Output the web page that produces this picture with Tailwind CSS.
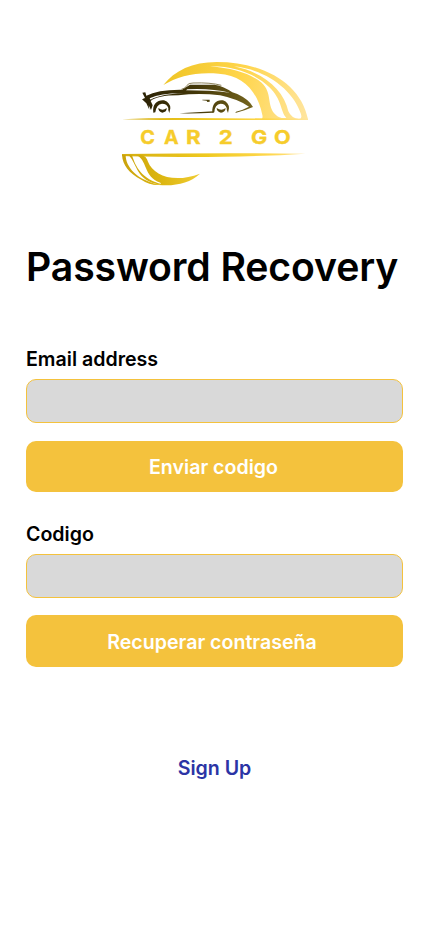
<!DOCTYPE html>
<html lang="es">
<head>
<meta charset="utf-8">
<meta name="viewport" content="width=device-width, initial-scale=1">
<title>Password Recovery</title>
<script src="https://cdn.jsdelivr.net/npm/@tailwindcss/browser@4"></script>
</head>
<body class="bg-white">
<main class="flex h-[934px] w-[430px] flex-col overflow-hidden bg-white pl-[26px] pr-[27px] pt-[50px] font-['Inter',sans-serif] font-semibold text-black">
  <svg class="ml-[84px] h-[145px] w-[210px] shrink-0" viewBox="0 0 630 435" role="img" aria-label="Car 2 Go">
    <defs>
      <linearGradient id="arc" gradientUnits="userSpaceOnUse" x1="160" y1="90" x2="595" y2="190"><stop offset="0" stop-color="#efc526"/><stop offset=".5" stop-color="#ffd54a"/><stop offset="1" stop-color="#ffe5a0"/></linearGradient>
      <linearGradient id="line" gradientUnits="userSpaceOnUse" x1="36" y1="0" x2="590" y2="0"><stop offset="0" stop-color="#d5ae10"/><stop offset=".45" stop-color="#efc91f"/><stop offset=".8" stop-color="#ffd74d"/><stop offset="1" stop-color="#ffe59c"/></linearGradient>
      <linearGradient id="tail" gradientUnits="userSpaceOnUse" x1="36" y1="0" x2="270" y2="0"><stop offset="0" stop-color="#c9a20c"/><stop offset=".5" stop-color="#dcb610"/><stop offset="1" stop-color="#f0cc32"/></linearGradient>
      <linearGradient id="car" gradientUnits="userSpaceOnUse" x1="95" y1="0" x2="430" y2="0"><stop offset="0" stop-color="#2b2205"/><stop offset=".5" stop-color="#443809"/><stop offset="1" stop-color="#75651e"/></linearGradient>
    </defs>
    <g fill="url(#arc)">
      <path d="M160 105C194 62 247 36 320 36C467 36 574 105 594 208H455Q459 203 457 195C443 125 400 75 326 71C260 65 204 78 160 105Z"/>
      <path fill="#fff" d="M300 49C371 47 437 72 478 112C516 148 511 184 529 204Q508 206 497 194C468 166 489 130 455 98Q403 57 300 49Z"/>
      <path fill="#fff" d="M372 49C471 59 550 122 572 190Q578 207 567 207Q545 206 535 184C521 118 459 67 372 49Z"/>
    </g>
    <path fill="url(#line)" d="M36 208Q130 203 230 204L594 206V210H260Q130 211 36 208ZM36 312Q330 308 586 311Q430 321 240 321Q110 320 36 318Z"/>
    <g fill="url(#tail)">
      <path d="M36 315H47C47 350 79 390 150 405Q120 407 94 389C57 370 38 345 36 315Z"/>
      <path d="M55 315H66C76 349 95 388 157 403Q134 404 115 393C78 374 77 335 55 315Z"/>
      <path d="M77 315H96Q109 319 114 335C130 376 190 401 270 371C235 404 178 412 124 401Q160 406 151 398C99 381 113 326 77 315Z"/>
    </g>
    <g fill="url(#car)">
      <path d="M97 128L106 127L109 137Q144 118 216 119L240 104H314Q342 109 367 127L382 132Q418 149 429 171Q407 181 376 189L378 185Q401 179 417 170Q383 147 330 136Q268 128 205 136Q142 136 122 153L128 166L123 180L116 166L118 179L109 160L96 148L105 144Z"/>
      <path fill="#fff" d="M119 145Q154 129 220 130Q150 133 122 149Z"/>
      <path fill="#fff" d="M232 118Q300 114 360 128Q300 121 228 121Z"/>
      <path d="M130 188C126 160 144 149 162 151Q181 158 181 175L178 189Q173 181 175 174Q171 161 156 161Q139 163 136 187Z"/>
      <path d="M307 188C305 160 321 148 339 151Q357 158 357 175L354 189Q349 181 350 174Q346 161 332 161Q314 163 313 187Z"/>
      <path d="M145 174Q158 184 170 174Q171 186 157 188Q145 185 145 174ZM320 174Q334 184 347 174Q346 187 333 188Q320 185 320 174ZM208 190L311 184V188Q260 191 208 190ZM277 149H299V155L292 156L290 152L277 151Z"/>
    </g>
    <path d="M214 118Q226 116 231 106Q235 99 249 99Q302 97 334 106" fill="none" stroke="#776b3d" stroke-width="2.5"/>
    <g fill="#f6cc2b" stroke="#f6cc2b" stroke-width="1" font-family="Inter, sans-serif" font-weight="700" font-size="57">
      <text x="91" y="282" textLength="44" lengthAdjust="spacingAndGlyphs">C</text>
      <text x="162" y="282" textLength="44" lengthAdjust="spacingAndGlyphs">A</text>
      <text x="228" y="282" textLength="44" lengthAdjust="spacingAndGlyphs">R</text>
      <text x="326" y="282" textLength="42" lengthAdjust="spacingAndGlyphs">2</text>
      <text x="423" y="282" textLength="49" lengthAdjust="spacingAndGlyphs">G</text>
      <text x="492" y="282" textLength="50" lengthAdjust="spacingAndGlyphs">O</text>
    </g>
  </svg>

  <h1 class="mt-[48px] h-[48px] whitespace-nowrap text-[39.2px] leading-[48px] tracking-[-0.14px]">Password Recovery</h1>

  <form class="flex flex-col text-[19.6px] leading-[24px]">
    <label for="email" class="mt-[56px]">Email address</label>
    <input id="email" type="email" class="mt-[8px] h-[44px] w-full rounded-[10px] border border-[#f4c23d] bg-[#d9d9d9]">
    <button type="button" class="mt-[18px] h-[51px] w-full rounded-[10px] bg-[#f4c23d] pr-[2px] pt-px text-white">Enviar codigo</button>
    <label for="code" class="mt-[30px]">Codigo</label>
    <input id="code" type="text" class="mt-[8px] h-[44px] w-full rounded-[10px] border border-[#f4c23d] bg-[#d9d9d9]">
    <button type="button" class="mt-[17px] h-[52px] w-full rounded-[10px] bg-[#f4c23d] pr-[5px] pt-[2px] text-white">Recuperar contraseña</button>
  </form>

  <a href="#" class="mt-[89px] self-center text-[19.6px] leading-[24px] text-[#2b34a5]">Sign Up</a>
</main>
</body>
</html>
